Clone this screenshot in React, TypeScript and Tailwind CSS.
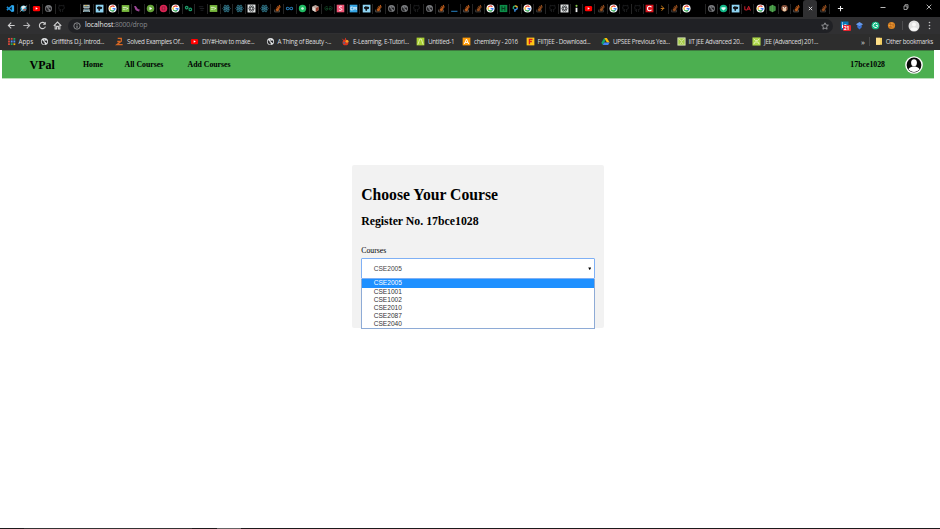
import React from "react";

type Name = string;

function Glyph({ name }: { name: Name }) {
  switch (name) {
    case "vscode":
      return (
        <>
          <path d="M1 3.2 7 8.3M1 6.8 7 1.7" stroke="#1b8fd6" strokeWidth="1.7" />
          <path d="M6.3 1 9 1.8v6.4L6.3 9z" fill="#2fa8ef" />
        </>
      );
    case "planet":
      return (
        <>
          <circle cx="5" cy="5" r="3.4" fill="#2d9fc4" />
          <path d="M2.5 3.5c1.5-2 4-2 5-.5L4 6z" fill="#e8eef0" />
          <path d="M1 8.5 9 1.8" stroke="#d8d8d8" strokeWidth=".8" />
          <path d="M5 6.5h2.5" stroke="#d5442f" strokeWidth="1.6" />
        </>
      );
    case "yt":
      return (
        <>
          <rect x="1" y="2.1" width="8" height="6" rx="1.4" fill="#ff0000" />
          <path d="m4.1 3.7 2.4 1.4-2.4 1.4z" fill="#fff" />
        </>
      );
    case "globe":
    case "globeLight": {
      const c = name === "globe" ? "#7b7d80" : "#e2e4e6";
      return (
        <>
          <circle cx="5" cy="5" r="3.9" fill={c} />
          <path d="M2.2 3.2 4 4.6v1.2l1.2.6v2.1C3 8.4 1.9 6.6 1.9 5zM5.4 1.800l-.6 1.3 1 1 1.2-.4 1.100 1.300L7.500 7l-1-1.200-1.400-.9.200-1-1.200-.6z" fill="#242426" />
        </>
      );
    }
    case "gh":
      return (
        <path
          d="M3.900 8.700V7.400c-1.300.3-1.500-.6-2-.8M6.200 8.700V7.200c0-.5 0-.7-.3-1 1.200-.1 2.200-.6 2.200-2.300 0-.5-.2-1-.5-1.300.1-.4.100-.9-.1-1.200-.6 0-1.100.4-1.300.5a5 5 0 0 0-2.400 0c-.3-.2-.8-.5-1.300-.5-.2.400-.2.900-.1 1.200-.3.400-.5.800-.5 1.300 0 1.700 1 2.200 2.200 2.300-.3.300-.3.600-.3 1"
          stroke="#222426"
          strokeWidth="1"
          fill="none"
        />
      );
    case "google":
      return (
        <>
          <circle cx="5" cy="5" r="4.500" fill="#fff" />
          <g fill="none" strokeWidth="1.400">
            <path d="M7.100 3.200A2.700 2.700 0 0 0 2.600 3.700" stroke="#ea4335" />
            <path d="M2.600 3.700a2.700 2.700 0 0 0 0 2.600" stroke="#fbbc05" />
            <path d="M2.600 6.300a2.700 2.700 0 0 0 4.300.7" stroke="#34a853" />
            <path d="M6.900 7a2.700 2.700 0 0 0 .8-1.900H5.100" stroke="#4285f4" />
          </g>
        </>
      );
    case "so":
      return (
        <>
          <path d="M1.800 6.200v2.600h5.400V6.200" fill="none" stroke="#6a6a6a" strokeWidth=".8" />
          <path d="M3 7.500h3.200M3.100 5.900l3.300.6M3.800 4.200l3 1.500M5 2.500l2.300 2.300M6.800 1.200l1.300 2.800" stroke="#c4601c" strokeWidth="1.200" />
        </>
      );
    case "soDim":
      return (
        <>
          <path d="M1.800 6.200v2.600h5.400V6.200" fill="none" stroke="#4c4d4e" strokeWidth=".8" />
          <path d="M3 7.500h3.200M3.100 5.900l3.300.6M3.800 4.200l3 1.500M5 2.500l2.300 2.300M6.800 1.200l1.300 2.800" stroke="#98501f" strokeWidth="1.200" />
        </>
      );
    case "bench":
      return (
        <>
          <path d="M1.500.8h7v3.700h-7zM2 5h6l1 4H1z" fill="#b9c4c4" />
          <path d="M2.500 3h5M2.500 6h5M2 8h6" stroke="#37606e" strokeWidth="1" />
          <path d="M3 1.800h3" stroke="#d0a944" />
        </>
      );
    case "kaggle":
      return (
        <>
          <rect x=".8" y=".8" width="8.600" height="8.600" fill="#8ed4f2" />
          <path d="M2.200 3.500 4 2.500l4 .8-.5 2.200-1.900.3-.4 2.100H4.100L3.800 5.800 2.500 5.300z" fill="#101518" />
        </>
      );
    case "upwork":
      return (
        <>
          <rect x=".8" y="1.200" width="8.400" height="7.600" fill="#77b83d" />
          <path d="M2 3.800h3.500M2 5.800h3M6 3.800l1.500 1M5.500 5.800l2.500-1" stroke="#e9f4df" strokeWidth=".9" />
        </>
      );
    case "bird":
      return <path d="M1.200 2.500c1.500-.8 2.500 0 3 1.500l1.200 1.500 3 1.200-2 .8.8 1-3-.9C2.500 7 2.200 5 1.200 2.500z" fill="#9d4796" />;
    case "play":
      return (
        <>
          <circle cx="5" cy="5" r="4.200" fill="#65a438" />
          <path d="m3.900 3 3 2-3 2z" fill="#fff" />
        </>
      );
    case "pink":
      return (
        <>
          <circle cx="5" cy="5" r="4.200" fill="#db2453" />
          <path d="M3.500 3.200h3v3.400h-3z" fill="none" stroke="#7d1b39" strokeWidth=".8" />
        </>
      );
    case "links":
      return (
        <g fill="none" stroke="#1d9b68" strokeWidth="1.400">
          <circle cx="3" cy="4" r="1.400" />
          <circle cx="7" cy="6" r="1.400" />
        </g>
      );
    case "dark":
      return <path d="M2 3h5M3 5h5M4 7h3" stroke="#202326" strokeWidth="1" />;
    case "react":
      return (
        <g fill="none" stroke="#347e92" strokeWidth=".8">
          <ellipse cx="5" cy="5" rx="4.200" ry="1.700" />
          <ellipse cx="5" cy="5" rx="4.200" ry="1.700" transform="rotate(60 5 5)" />
          <ellipse cx="5" cy="5" rx="4.200" ry="1.700" transform="rotate(120 5 5)" />
          <circle cx="5" cy="5" r=".8" fill="#347e92" />
        </g>
      );
    case "atom":
      return (
        <>
          <rect x=".6" y=".6" width="8.800" height="8.800" fill="#e1e3e3" />
          <g fill="none" stroke="#35383a" strokeWidth=".7">
            <ellipse cx="5" cy="5" rx="3.500" ry="1.500" />
            <ellipse cx="5" cy="5" rx="3.500" ry="1.500" transform="rotate(60 5 5)" />
            <ellipse cx="5" cy="5" rx="3.500" ry="1.500" transform="rotate(120 5 5)" />
          </g>
        </>
      );
    case "infinity":
      return <path d="M5 5C3.500 3 1.500 3.200 1.500 5s2 2 3.500 0 3.500-1.800 3.500 0-2 2-3.500 0z" fill="none" stroke="#2475ac" strokeWidth="1.200" />;
    case "green":
      return (
        <>
          <circle cx="5" cy="5" r="4.100" fill="#20ba62" />
          <path d="M3.500 5h3M5 3.500v3" stroke="#c9f7da" strokeWidth="1.500" />
        </>
      );
    case "cube":
      return (
        <>
          <path d="m5 1 3.500 1.700v4L5 9 1.500 6.700v-4z" fill="#b8a299" />
          <path d="M5 4.600 8.500 3v4L5 9z" fill="#973b2b" />
          <path d="M1.500 3 5 4.600V9L1.500 7z" fill="#ded6cf" />
        </>
      );
    case "gfg":
      return <path d="M4.300 3.500C2.500 2 1 3.200 1 5s2 2.500 3.300 1V5h-2M5.700 3.500C7.500 2 9 3.200 9 5s-2 2.500-3.300 1V5h2" fill="none" stroke="#16522c" strokeWidth=".9" />;
    case "scihub":
      return (
        <>
          <rect x=".8" y=".8" width="8.400" height="8.400" fill="#ef5575" />
          <path d="M6.500 2.700c-3-1-3.500 1.500-1.500 2s2 3.200-1.500 2.300" fill="none" stroke="#fff" />
        </>
      );
    case "cm":
      return (
        <>
          <rect x=".8" y=".8" width="8.500" height="8.500" fill="#36a5e4" />
          <path d="M4.200 3.500H2.100v3h2.100M5.400 6.700V3.500L6.700 5 8 3.500v3.200" fill="none" stroke="#fff" strokeWidth=".9" />
        </>
      );
    case "dash":
      return <path d="M1.300 8.100h7" stroke="#2b91d9" strokeWidth="1" />;
    case "hacker":
      return (
        <>
          <rect x=".8" y="1" width="8.400" height="8" fill="#0c8d47" />
          <path d="M3.300 2.500v5M6.500 2.500v5M3.300 5h3.200" stroke="#09391f" strokeWidth="1.100" />
        </>
      );
    case "pcolors":
      return (
        <g fill="none" strokeWidth="1.600">
          <path d="M3 5.500A2 2 0 0 1 4.500 2.200" stroke="#28aa79" />
          <path d="M4.500 2.200A2.200 2.200 0 0 1 7 4.200" stroke="#e8b72f" />
          <path d="M7 4.200A2.200 2.200 0 0 1 4.300 6.300V8.500" stroke="#3a8dde" />
        </g>
      );
    case "info":
      return (
        <>
          <path d="M5 4.200V9" stroke="#eee" strokeWidth="2" />
          <circle cx="5" cy="2" r="1.200" fill="#7fc144" />
        </>
      );
    case "redc":
      return (
        <>
          <rect x=".6" y=".8" width="8.800" height="8.400" fill="#d9151d" />
          <path d="M7.200 3.600C6.600 2.600 5.800 2.500 5 2.500 3.600 2.500 2.800 3.500 2.800 5s.8 2.500 2.200 2.500c.8 0 1.600-.1 2.200-1.100" fill="none" stroke="#fff" strokeWidth="1.200" />
        </>
      );
    case "leet":
      return <path d="m3.500 2 3 2.600L4 7.500M3 5h4" fill="none" stroke="#c47a1b" strokeWidth="1.100" />;
    case "teal":
      return (
        <>
          <circle cx="5" cy="5" r="4.200" fill="#12b888" />
          <path d="M2.700 3.700h4.600v1.500L5 7.100 2.700 5.200z" fill="#e0fff6" />
        </>
      );
    case "la":
      return <path d="M2 2.500v4h2M4.300 7.200 6.300 2.500l1.900 4.700M5.200 5.700h2.200" fill="none" stroke="#d3202f" strokeWidth="1.100" />;
    case "hex":
      return (
        <>
          <path d="m5 .8 3.600 2v4.400L5 9.200l-3.600-2V2.800z" fill="#3f9142" />
          <path d="M5 1v8M3.200 2v6" stroke="#65ad58" strokeWidth=".7" />
        </>
      );
    case "monkey":
      return (
        <>
          <circle cx="5" cy="4.600" r="3.600" fill="#885139" />
          <circle cx="5" cy="6.300" r="2" fill="#e7c9a9" />
          <path d="M3 4h1.400M5.700 4H7" stroke="#f4e6dc" strokeWidth="1.200" />
        </>
      );
    case "apps":
      return (
        <>
          <path d="M1.200 2h2M1.200 5h2M1.200 8h2" stroke="#e04a3b" strokeWidth="2" />
          <path d="M4.200 2h2" stroke="#e04a3b" strokeWidth="2" />
          <path d="M4.200 5h2M7.200 5h2" stroke="#4f8ff7" strokeWidth="2" />
          <path d="M7.200 2h2M4.200 8h2" stroke="#1fa863" strokeWidth="2" />
          <path d="M7.200 8h2" stroke="#f4b400" strokeWidth="2" />
        </>
      );
    case "solved":
      return <path d="M3 1.500h4v3.200L2 8.500h6.500M2.500 5h3" fill="none" stroke="#d96823" strokeWidth="1.400" />;
    case "elearn":
      return (
        <>
          <circle cx="5" cy="6" r="3.300" fill="#d53620" />
          <circle cx="6.700" cy="4.800" r="1.600" fill="#f2a028" />
          <path d="m1.500 2 2.500 3M5 1v3" stroke="#d53620" />
          <circle cx="3.500" cy="6.500" r="1" fill="#2b70ad" />
        </>
      );
    case "lime":
      return (
        <>
          <rect x=".7" y=".7" width="8.600" height="8.600" fill="#a9cf32" />
          <path d="M2 8.500 4.200 2.300h1.600L8 8.500" fill="none" stroke="#e8f5bf" strokeWidth=".9" />
        </>
      );
    case "aorange":
      return (
        <>
          <rect x=".7" y=".7" width="8.600" height="8.600" fill="#ff9d0a" />
          <path d="M2.600 7.800 5 2.300l2.400 5.500M3.500 6h3" fill="none" stroke="#fff" strokeWidth="1.100" />
        </>
      );
    case "fiit":
      return (
        <>
          <rect x=".7" y=".7" width="8.600" height="8.600" fill="#ffc617" />
          <path d="M3.800 8V2.600h3.500M3.800 5h2.700" fill="none" stroke="#d61f20" strokeWidth="1.500" />
        </>
      );
    case "drive":
      return (
        <>
          <path d="M3.500 1h3L9.600 6h-3z" fill="#fbbc05" />
          <path d="M3.500 1 .4 6.400 2 9l3-5.500z" fill="#16a765" />
          <path d="M3.400 6h6.200L8 9H2z" fill="#4285f4" />
        </>
      );
    case "jee":
      return (
        <>
          <rect x=".5" y=".5" width="9" height="9" fill="#abd547" />
          <path d="M2 2.200 4 4h2l2-1.800M2 8l1.500-2.500h3L8 8" fill="none" stroke="#edf8cf" strokeWidth=".9" />
        </>
      );
    case "jeeLight":
      return (
        <>
          <rect x=".5" y=".5" width="9" height="9" fill="#dcebb7" />
          <rect x="1.500" y="1.500" width="7" height="7" fill="#a4ca47" />
          <path d="m2.500 2.500 2.500 2 2.500-2M3 7.700 5 5.800l2 1.900" fill="none" stroke="#eef7cf" strokeWidth=".8" />
        </>
      );
    default:
      return null;
  }
}

function Icon({ name, className = "size-[9px]" }: { name: Name; className?: string }) {
  return (
    <svg viewBox="0 0 10 10" fill="none" className={`shrink-0 ${className}`}>
      <Glyph name={name} />
    </svg>
  );
}

const firstTabs =
  "vscode planet yt globe gh blank bench kaggle google upwork bird play pink google links dark upwork react react atom react so infinity green cube gfg scihub cm kaggle so globe globe gh globe".split(" ");
const laterTabs =
  "so dash so soDim google hacker pcolors google soDim gh atom info yt soDim google gh gh redc leet soDim google blank globe teal kaggle la google hex monkey so".split(" ");

function TabStrip() {
  return (
    <div className="flex h-[17px] items-center bg-black">
      <div className="flex pl-[5px]">
        {firstTabs.map((n, i) => (
          <div
            key={i}
            className={`flex h-[10px] w-[12.700px] items-center justify-center border-r ${i === 4 ? "border-transparent" : "border-[#252525]"}`}
          >
            <Icon name={n} />
          </div>
        ))}
      </div>
      <div className="flex">
        {laterTabs.map((n, i) => (
          <div
            key={i}
            className={`flex h-[10px] w-[12.240px] items-center justify-center border-r ${i === 29 || i === 20 ? "border-transparent" : "border-[#252525]"}`}
          >
            <Icon name={n} />
          </div>
        ))}
      </div>
      <div className="flex h-[17px] w-[14px] items-center justify-center rounded-t-[3px] bg-[#303032]">
        <svg viewBox="0 0 6 6" className="size-[5px]" stroke="#dcdcdc" strokeWidth="1.100">
          <path d="m1 1 4 4M5 1 1 5" />
        </svg>
      </div>
      <div className="flex h-[10px] w-[13px] items-center justify-center border-r border-[#252525]">
        <Icon name="soDim" />
      </div>
      <svg viewBox="0 0 8 8" className="ml-[7px] size-[7px]" stroke="#f2f2f2" strokeWidth="1.200">
        <path d="M4 1v6M1 4h6" />
      </svg>
      <div className="mr-[8px] ml-auto flex items-center gap-[17px] pb-[3px]">
        <svg viewBox="0 0 6 6" className="size-[6px]" stroke="#b8b8b8">
          <path d="M.5 3.500h5" />
        </svg>
        <svg viewBox="0 0 6 6" className="size-[6px]" stroke="#b8b8b8" fill="none" strokeWidth=".8">
          <path d="M1 2h3v3.500H1zM2 2V.7h3v3.500H4" />
        </svg>
        <svg viewBox="0 0 6 6" className="size-[6px]" stroke="#c4c4c4" strokeWidth=".9">
          <path d="m.7.7 4.600 4.600M5.300.7.7 5.300" />
        </svg>
      </div>
    </div>
  );
}

function Toolbar() {
  return (
    <div className="flex h-[17px] items-center bg-[#303032] pl-[6.500px]">
      <div className="flex items-center gap-[6.500px]">
        <svg viewBox="0 0 10 10" className="size-[9px]" fill="none" stroke="#d0d0d1" strokeWidth="1.200">
          <path d="M8.500 5h-7M4.700 1.800 1.500 5l3.200 3.200" />
        </svg>
        <svg viewBox="0 0 10 10" className="size-[9px]" fill="none" stroke="#b5b5b7" strokeWidth="1.200">
          <path d="M1.500 5h7M5.300 1.800 8.500 5 5.300 8.200" />
        </svg>
        <svg viewBox="0 0 10 10" className="size-[9px]" fill="none" stroke="#d0d0d1" strokeWidth="1.200">
          <path d="M8.300 6.300A3.500 3.500 0 1 1 7.600 2.600" />
          <path d="M8.700.8v3.500H5.200z" fill="#d0d0d1" stroke="none" />
        </svg>
        <svg viewBox="0 0 10 10" className="size-[9px]" fill="none" stroke="#d0d0d1" strokeWidth="1.200">
          <path d="M.8 5.300 5 1.200l4.200 4.100M2.400 4.500v4.300H4V6h2v2.800h1.600V4.500" />
        </svg>
      </div>
      <div className="ml-[6px] flex h-[14px] w-[765px] items-center rounded-full bg-[#202125] pr-[4px] pl-[5px]">
        <svg viewBox="0 0 10 10" className="size-[8px]" fill="none" stroke="#a5a7aa" strokeWidth="1">
          <circle cx="5" cy="5" r="4" />
          <path d="M5 4.400v3M5 2.400v1" strokeWidth="1.200" />
        </svg>
        <span className="ml-[4px] text-[6.900px] leading-none tracking-[-0.170px] text-[#86888b]">
          <span className="tracking-[-0.050px] text-[#e8e8e9]">localhost</span>:8000/drop
        </span>
        <svg viewBox="0 0 10 10" className="ml-auto size-[8px]" fill="none" stroke="#a9abae">
          <path d="m5 1 1.200 2.700 3 .3L7 6l.6 3L5 7.500 2.400 9 3 6 .8 4l3-.3z" />
        </svg>
      </div>
      <div className="relative ml-[6.500px] size-[9px]">
        <svg viewBox="0 0 9 9" className="size-[9px]">
          <path d="M.8.500h7.700v8H.8z" fill="#0877b7" />
          <path d="M2.500 3.500V7M2.500 1.500v1M4.500 7V3.500M4.500 4.500c1-1.500 2.300-1 2.300.5v2" fill="none" stroke="#fff" />
        </svg>
        <span className="absolute top-[4px] left-[3px] flex h-[6px] w-[8px] items-center justify-center rounded-[1px] bg-[#e5252e] text-[5px] leading-none font-bold text-white">
          21
        </span>
      </div>
      <svg viewBox="0 0 10 10" className="ml-[6.500px] size-[9px]">
        <path d="m5 1 4 2.700L5 6 1 3.700z" fill="#6598ec" />
        <path d="M2.500 4.500 5 6l2.500-1.500V7L5 9.500 2.500 7z" fill="#3974d9" />
      </svg>
      <svg viewBox="0 0 10 10" className="ml-[7px] size-[9px]">
        <circle cx="5" cy="5" r="4.300" fill="#15bd88" />
        <path d="M7 3.200A2.500 2.500 0 1 0 7.300 6V5H5.500" fill="none" stroke="#fff" />
      </svg>
      <svg viewBox="0 0 10 10" className="ml-[6.500px] size-[9px]">
        <circle cx="5" cy="5" r="4" fill="#d98322" />
        <path d="M3 3.500h2M6 4.500h1.500M3 6.500h2.500" stroke="#a95a1c" strokeWidth="1" />
        <path d="M5 2.500h1M2 5h1M5 5.500h1" stroke="#f2bc68" />
      </svg>
      <div className="ml-[6px] h-[9px] w-px bg-[#4c4c4e]" />
      <svg viewBox="0 0 12 12" className="ml-[5px] size-[12px]">
        <circle cx="6" cy="6" r="5.500" fill="#e2e2e2" />
        <circle cx="6" cy="4.600" r="2" fill="#f8f8f8" />
        <path d="M2.500 9.500c.5-3 6.500-3 7 0A5 5 0 0 1 2.500 9.500" fill="#f8f8f8" />
      </svg>
      <svg viewBox="0 0 3 9" className="ml-[8px] h-[9px] w-[3px]" fill="#c1c1c3">
        <circle cx="1.500" cy="1.500" r=".8" />
        <circle cx="1.500" cy="4.500" r=".8" />
        <circle cx="1.500" cy="7.500" r=".8" />
      </svg>
    </div>
  );
}

const bookmarks: { icon: Name; label: string; cls: string }[] = [
  { icon: "apps", label: "Apps", cls: "w-[33px]" },
  { icon: "globeLight", label: "Griffiths D.J. Introd...", cls: "w-[75.500px]" },
  { icon: "solved", label: "Solved Examples Of...", cls: "w-[75px]" },
  { icon: "yt", label: "DIY#How to make...", cls: "w-[75.500px]" },
  { icon: "globeLight", label: "A Thing of Beauty -...", cls: "w-[75.500px]" },
  { icon: "elearn", label: "E-Learning, E-Tutori...", cls: "w-[75px]" },
  { icon: "lime", label: "Untitled-1", cls: "w-[46px]" },
  { icon: "aorange", label: "chemistry - 2016", cls: "w-[63.500px]" },
  { icon: "fiit", label: "FIITJEE - Download...", cls: "w-[75.500px]" },
  { icon: "drive", label: "UPSEE Previous Yea...", cls: "w-[75.500px]" },
  { icon: "jeeLight", label: "IIT JEE Advanced 20...", cls: "w-[75.500px]" },
  { icon: "jee", label: "JEE (Advanced) 201...", cls: "w-[75px]" },
];

function BookmarksBar() {
  return (
    <div className="flex h-[16px] items-center bg-[#2d2d2d] pb-[2px] pl-[6.500px] text-[6.300px] leading-[9px] tracking-[-0.290px] text-[#dededf]">
      {bookmarks.map((b) => (
        <div key={b.label} className={`flex shrink-0 items-center gap-[3px] whitespace-nowrap ${b.cls}`}>
          <Icon name={b.icon} className="size-[9px]" />
          <span className={b.label === "Apps" ? "tracking-normal" : ""}>{b.label}</span>
        </div>
      ))}
      <span className="ml-auto text-[8px]">»</span>
      <div className="ml-[4px] h-[9px] w-px bg-[#484848]" />
      <svg viewBox="0 0 8 8" className="ml-[5px] size-[8px]">
        <path d="M1 .8h6v7H1z" fill="#f4cf63" />
        <path d="M1 .8h4v7H1z" fill="#ffe08a" />
      </svg>
      <span className="mr-[7px] ml-[3px]">Other bookmarks</span>
    </div>
  );
}

function NavBar() {
  return (
    <nav className="mr-[6.500px] ml-[1.500px] flex h-[29px] items-center border-t border-b border-t-[#3e7b40] border-b-[#b9e0ba] bg-[#4caf50] font-['Liberation_Serif',serif] text-[7.800px] font-bold text-black">
      <span className="ml-[28px] w-[53.500px] text-[12px]">VPal</span>
      <span className="w-[41.500px]">Home</span>
      <span className="w-[63px]">All Courses</span>
      <span>Add Courses</span>
      <span className="ml-auto">17bce1028</span>
      <svg viewBox="0 0 18 18" className="mr-[10.500px] ml-[20px] size-[18px]">
        <circle cx="9" cy="9" r="8.800" fill="#fff" />
        <circle cx="9" cy="9" r="7.400" fill="#0a0a0a" />
        <ellipse cx="9" cy="6.700" rx="2.900" ry="3.500" fill="#fff" />
        <path d="M3.500 13.500c.5-2 2.500-2.300 4-3h3c1.500.7 3.500 1 4 3-3 3.300-8 3.300-11 0z" fill="#fff" />
      </svg>
    </nav>
  );
}

const courses = ["CSE2005", "CSE1001", "CSE1002", "CSE2010", "CSE2087", "CSE2040"];

function CourseForm() {
  return (
    <main className="mt-[86px] ml-[351.500px] h-[162.500px] w-[252.500px] rounded-[2px] bg-[#f2f2f2] pt-[20.500px] pr-[9.200px] pl-[9.700px] font-['Liberation_Serif',serif] text-black">
      <h1 className="text-[15.700px] leading-[18px] font-bold">Choose Your Course</h1>
      <h2 className="mt-[10px] text-[11.800px] leading-[14px] font-bold">Register No. 17bce1028</h2>
      <div className="mt-[18px] text-[7.800px] leading-[9px]">Courses</div>
      <div className="mt-[3.500px] font-['Liberation_Sans',sans-serif] text-[6.600px]">
        <div className="flex h-[21px] items-center justify-between rounded-[1px] border border-[#7fb0f5] bg-white pt-[1px] pr-[2.500px] pl-[11.500px] text-[#444]">
          <span>{courses[0]}</span>
          <svg viewBox="0 0 4 4" className="mb-[1px] size-[3.500px]">
            <path d="M.3.600h3.400L2 3.700z" fill="#000" />
          </svg>
        </div>
        <div className="border border-t-0 border-[#8eabd6] bg-white text-[#333]">
          {courses.map((c, i) => (
            <div
              key={c}
              className={`flex items-center pl-[11.500px] leading-none ${i === 0 ? "h-[9px] bg-[#1e90ff] text-white" : "h-[8.050px]"}`}
            >
              {c}
            </div>
          ))}
        </div>
      </div>
    </main>
  );
}

export default function App() {
  return (
    <div className="flex h-[529px] w-[940px] flex-col overflow-hidden bg-white font-['Open_Sans','Noto_Sans',sans-serif]">
      <header className="shrink-0">
        <TabStrip />
        <Toolbar />
        <BookmarksBar />
      </header>
      <NavBar />
      <CourseForm />
      <footer className="mt-auto flex h-px bg-[#1d1a1c]">
        <div className="ml-[24px] h-px w-[168px] bg-[#353334]" />
        <div className="ml-[25px] h-px w-[24px] bg-[#656364]" />
      </footer>
    </div>
  );
}
